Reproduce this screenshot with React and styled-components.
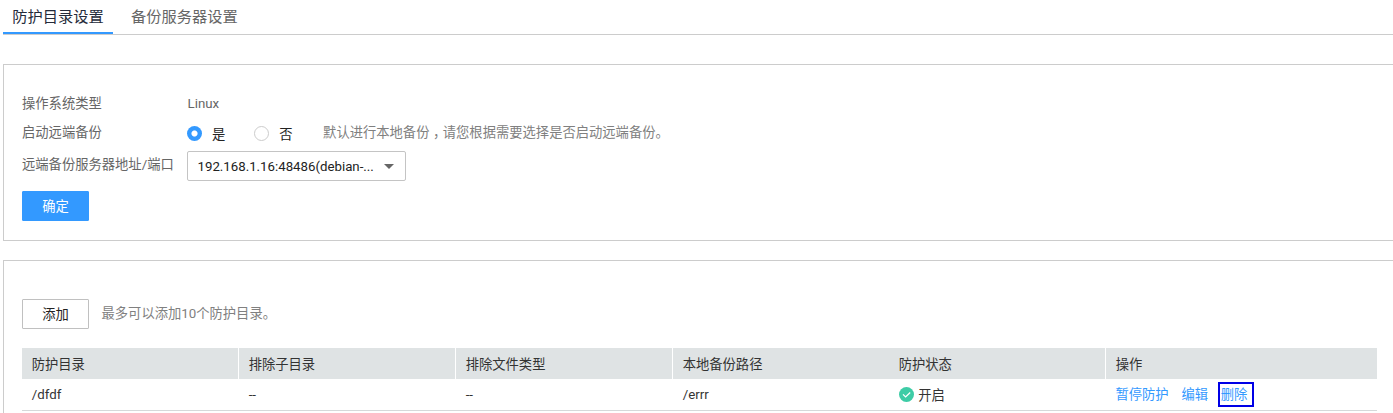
import React from "react";
import styled, { createGlobalStyle } from "styled-components";

const GlobalStyle = createGlobalStyle`
  * { box-sizing: border-box; }
  html, body { margin: 0; background: #fff; overflow: hidden; }
  body {
    font-family: Roboto, "Noto Sans CJK SC", sans-serif;
    font-size: 13.3px;
    color: #333;
  }
`;

const Page = styled.div`
  height: 413px;
  padding-left: 3px;
  overflow: hidden;
  display: flex;
  flex-direction: column;
`;

const Tabs = styled.nav`
  display: flex;
  flex: none;
  height: 35px;
  border-bottom: 1px solid #ccc;
`;

const Tab = styled.a`
  height: 34px;
  padding: 0 9.2px;
  margin-right: 9px;
  font-size: 15.25px;
  line-height: 35px;
  white-space: nowrap;
  color: ${(p) => (p.$active ? "#252b3a" : "#666")};
  border-bottom: ${(p) => (p.$active ? "2px solid #3399ff" : "none")};
`;

const Panel = styled.section`
  flex: none;
  height: ${(p) => p.$height}px;
  margin-top: ${(p) => p.$gap}px;
  padding: ${(p) => p.$top}px 16px 0 18px;
  border: 1px solid #ccc;
  border-right: 0;
`;

const FormRow = styled.div`
  display: flex;
  align-items: flex-start;
  height: ${(p) => p.$height}px;
`;

const Label = styled.label`
  width: 165px;
  line-height: 28px;
  color: #666;
  white-space: nowrap;
`;

const Value = styled.span`
  line-height: 28px;
  padding-left: 0.5px;
  color: #666;
`;

const Radio = styled.span`
  display: flex;
  align-items: center;
  gap: 10px;
  height: 28px;
  margin-right: ${(p) => p.$after}px;
  color: #222;
`;

const Dot = styled.span`
  width: 15px;
  height: 15px;
  border-radius: 50%;
  background: ${(p) =>
    p.$checked ? "radial-gradient(circle, #fff 2.6px, #3399ff 3.5px)" : "#fff"};
  border: ${(p) => (p.$checked ? "none" : "1px solid #ccc")};
`;

const Hint = styled.span`
  line-height: ${(p) => p.$line || 28}px;
  color: #808080;
  white-space: nowrap;
`;

const Comma = styled.span`
  font-feature-settings: "halt";
  margin: 0 3.15px 0 3.5px;
`;

const Select = styled.div`
  display: flex;
  align-items: center;
  justify-content: space-between;
  width: 219px;
  height: 30px;
  padding: 0 11px 0 9.5px;
  font-size: 13.25px;
  border: 1px solid #c4c4c4;
  border-radius: 2px;
  color: #222;
`;

const Caret = styled.span`
  border: 5px solid transparent;
  border-top-color: #666;
  border-bottom: 0;
`;

const Button = styled.button`
  width: 67px;
  height: 30px;
  padding: 0 0 2px;
  font: inherit;
  color: ${(p) => (p.$primary ? "#fff" : "#222")};
  background: ${(p) => (p.$primary ? "#3399ff" : "#fff")};
  border: 1px solid ${(p) => (p.$primary ? "#3399ff" : "#c0c0c0")};
  border-radius: 1px;
`;

const AddRow = styled.div`
  display: flex;
  gap: 12.5px;
  height: 49px;
`;

const Table = styled.div`
  width: 1355px;
`;

const Row = styled.div`
  display: grid;
  grid-template-columns: 217px 217px 217px 216px 217px 1fr;
  height: ${(p) => (p.$head ? 31 : 32)}px;
  background: ${(p) => (p.$head ? "#dfe3e4" : "#fff")};
  border-bottom: ${(p) => (p.$head ? "none" : "1px solid #d6d9da")};
`;

const Cell = styled.div`
  display: flex;
  align-items: center;
  padding-left: 9.7px;
  white-space: nowrap;
  border-right: ${(p) => (p.$divider ? "1px solid #fff" : "none")};
`;

const Status = styled.span`
  display: flex;
  align-items: center;
  gap: 4.5px;
  padding-bottom: 1px;
`;

const Actions = styled.div`
  display: flex;
  align-items: center;
  margin-left: -0.3px;
`;

const Link = styled.a`
  color: #3399ff;
  padding-bottom: 2px;
  margin-right: ${(p) => p.$after || 0}px;
`;

const Marked = styled.span`
  display: flex;
  align-items: center;
  width: 36px;
  height: 25px;
  padding-left: 1px;
  border: 2px solid #0000e6;
`;

const CheckIcon = () => (
  <svg width="15" height="15" viewBox="0 0 15 15">
    <circle cx="7.5" cy="7.5" r="7.5" fill="#3dcca6" />
    <path d="M4 7.4l2.6 2.5 4.6-4.4" fill="none" stroke="#fff" strokeWidth="1.3" />
  </svg>
);

const columns = ["防护目录", "排除子目录", "排除文件类型", "本地备份路径", "防护状态", "操作"];
const dividers = [true, true, true, false, true, false];

export default function App() {
  return (
    <Page>
      <GlobalStyle />
      <Tabs>
        <Tab $active>防护目录设置</Tab>
        <Tab>备份服务器设置</Tab>
      </Tabs>

      <Panel $height={177} $gap={29} $top={25}>
        <FormRow $height={29}>
          <Label>操作系统类型</Label>
          <Value>Linux</Value>
        </FormRow>
        <FormRow $height={32}>
          <Label>启动远端备份</Label>
          <Radio $after={29}><Dot $checked />是</Radio>
          <Radio $after={30.5}><Dot />否</Radio>
          <Hint>默认进行本地备份<Comma>，</Comma>请您根据需要选择是否启动远端备份。</Hint>
        </FormRow>
        <FormRow $height={40}>
          <Label>远端备份服务器地址/端口</Label>
          <Select>192.168.1.16:48486(debian-...<Caret /></Select>
        </FormRow>
        <Button $primary>确定</Button>
      </Panel>

      <Panel $height={180} $gap={19} $top={38}>
        <AddRow>
          <Button>添加</Button>
          <Hint $line={30}>最多可以添加10个防护目录。</Hint>
        </AddRow>
        <Table>
          <Row $head>
            {columns.map((name, i) => (
              <Cell key={name} $divider={dividers[i]}>{name}</Cell>
            ))}
          </Row>
          <Row>
            <Cell>/dfdf</Cell>
            <Cell>--</Cell>
            <Cell>--</Cell>
            <Cell>/errr</Cell>
            <Cell><Status><CheckIcon />开启</Status></Cell>
            <Cell>
              <Actions>
                <Link $after={13}>暂停防护</Link>
                <Link $after={9.5}>编辑</Link>
                <Marked><Link>删除</Link></Marked>
              </Actions>
            </Cell>
          </Row>
        </Table>
      </Panel>
    </Page>
  );
}
